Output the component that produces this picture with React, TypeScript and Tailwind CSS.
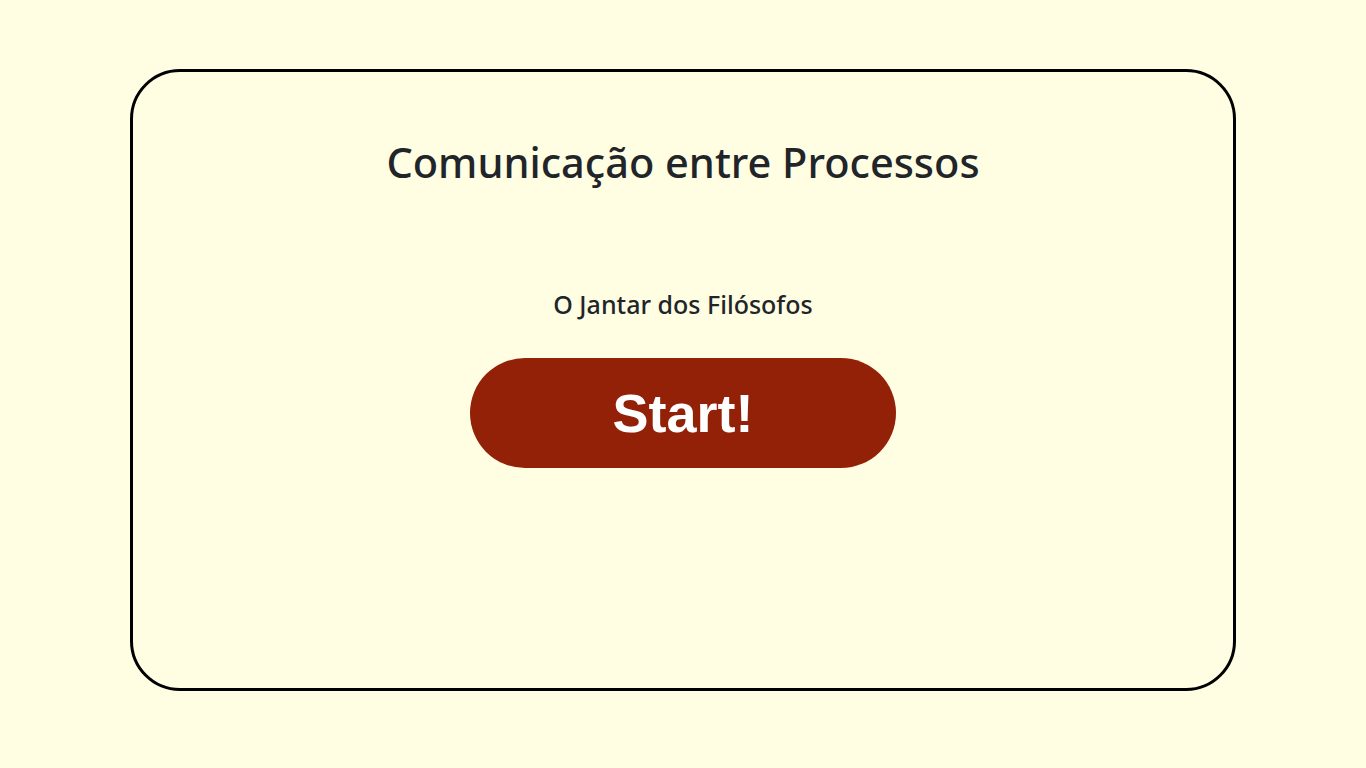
export default function App() {
  return (
    <div className="min-h-screen bg-[#fffde2] pt-[69px] flex justify-center">
      <div className="w-[1106px] h-[622px] border-[3px] border-black rounded-[50px] flex flex-col items-center pt-[62px] font-['Noto_Sans',sans-serif] text-[#212529]">
        <h1 className="text-[41.5px] leading-[56px] font-medium">Comunicação entre Processos</h1>
        <h2 className="mt-[96px] text-[25px] leading-[36px] font-medium">O Jantar dos Filósofos</h2>
        <button className="mt-[36px] w-[426px] h-[110px] rounded-full bg-[#932108] text-white font-['Liberation_Sans',Arial,sans-serif] font-bold text-[54px]">
          Start!
        </button>
      </div>
    </div>
  );
}
